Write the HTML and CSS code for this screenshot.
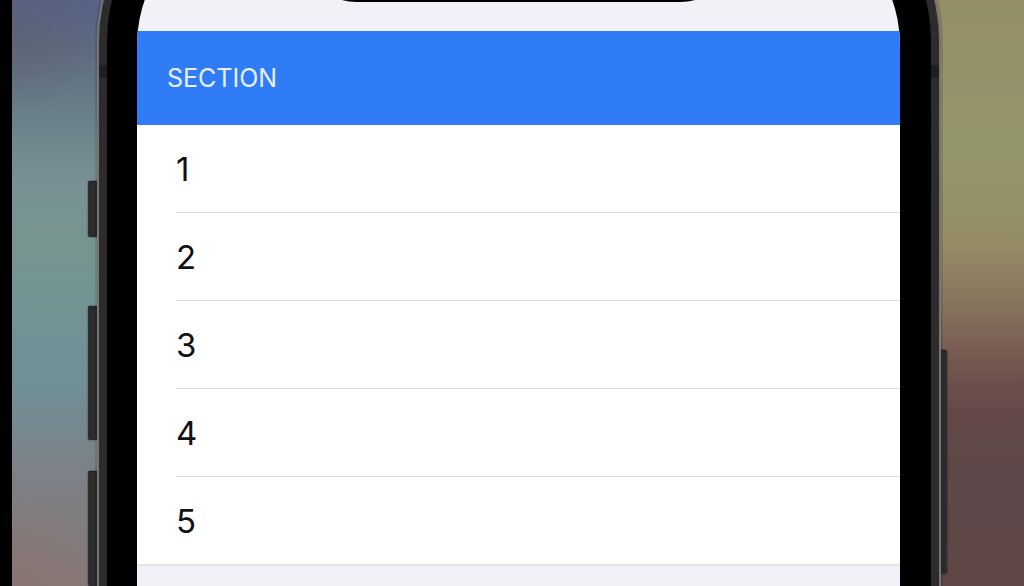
FILE: index.html
```html
<!DOCTYPE html>
<html lang="en">
<head>
    <meta charset="UTF-8">
    <meta name="viewport" content="width=device-width, initial-scale=1.0">
    <title>Section List</title>
    <link rel="stylesheet" href="styles.css">
</head>
<body>

    <div class="wallpaper">
        <!-- Volume side -->
        <div class="side side-left">
            <div class="key key-mute"></div>
            <div class="key key-volume"></div>
            <div class="key key-fill"></div>
        </div>

        <div class="phone">
            <div class="antenna"></div>
            <div class="bezel">
                <main class="screen">
                    <div class="status-bar">
                        <div class="notch"></div>
                    </div>
                    <h2 class="section-header">SECTION</h2>
                    <ul class="list">
                        <li class="row">1</li>
                        <li class="row">2</li>
                        <li class="row">3</li>
                        <li class="row">4</li>
                        <li class="row">5</li>
                    </ul>
                </main>
            </div>
        </div>

        <!-- Power side -->
        <div class="side side-right">
            <div class="key key-power"></div>
        </div>
    </div>

</body>
</html>
```
FILE: styles.css
```css
* {
    margin: 0;
    padding: 0;
    box-sizing: border-box;
}

body {
    font-family: Inter, "Liberation Sans", sans-serif;
    background-color: #000;
    padding-left: 12px;
}

.wallpaper {
    display: flex;
    height: 100vh;
    min-height: 586px;
    overflow: hidden;
    background-image:
        radial-gradient(circle at 0 100%, rgba(139, 114, 112, 0.7), rgba(139, 114, 112, 0) 100px),
        radial-gradient(circle at 0 30px, rgba(94, 94, 108, 0.5), rgba(94, 94, 108, 0) 90px),
        linear-gradient(#566289 0, #5e6b80 50px, #6a8089 115px, #789195 185px, #76958f 245px, #729296 325px, #718f96 385px, #77868d 435px, #7e8084 490px, #857a78 586px),
        linear-gradient(#958e67 0, #94926a 80px, #95956b 140px, #949268 200px, #948b65 245px, #89765e 300px, #7a5f52 345px, #6c4f4c 385px, #644849 415px, #5f4849 470px, #5f4748 586px);
    background-repeat: no-repeat;
    background-position: left, left, left, right;
    background-size: 50% 100%;
}

.side {
    display: flex;
    flex-direction: column;
}

.side-left {
    width: 85px;
    padding-top: 181px;
    align-items: flex-end;
}

.side-right {
    width: 83px;
    padding-top: 350px;
}

.key {
    width: 9px;
    background-color: #2c2c2c;
    border-top: 1px solid #1c1e1e;
    border-radius: 2px 0 0 2px;
    box-shadow: 0 0 2px rgba(0, 0, 0, 0.6);
}

.key-mute {
    height: 56px;
    margin-bottom: 69px;
}

.key-volume {
    height: 134px;
    margin-bottom: 31px;
}

.key-fill {
    flex: 1;
}

.key-power {
    width: 6px;
    height: 224px;
    border-radius: 0 2px 2px 0;
}

/* the top of the phone runs past the top of the page */
.phone {
    position: relative;
    flex: 1;
    display: flex;
    margin-top: -130px;
    padding: 8px 8px 0;
    background-color: #2c2c2c;
    border: 2px solid #777674;
    border-bottom: none;
    border-radius: 170px 170px 0 0;
    box-shadow: 0 0 0 2px rgba(0, 0, 0, 0.12);
}

.antenna {
    position: absolute;
    top: 193px;
    left: 0;
    right: 0;
    height: 13px;
    background-color: #1f1f1f;
}

.bezel {
    position: relative;
    flex: 1;
    display: flex;
    padding: 30px 31px 0 30px;
    background-color: #000;
    border-radius: 160px 160px 0 0;
}

.screen {
    flex: 1;
    overflow: hidden;
    background-color: #f2f1f7;
    border-radius: 135px 135px 0 0;
}

.status-bar {
    display: flex;
    justify-content: center;
    height: 121px;
}

.notch {
    width: 58%;
    height: 92px;
    background-color: #000;
    border-radius: 0 0 60px 60px;
}

.section-header {
    padding: 1px 30px 0;
    background-color: #307cf6;
    color: #e6f0ff;
    font-size: 25px;
    font-weight: 400;
    line-height: 93px;
}

.list {
    list-style: none;
    padding-left: 39px;
    background-color: #fff;
    border-bottom: 2px solid #e5e5e7;
}

.row {
    height: 88px;
    border-bottom: 1px solid #dededf;
    color: #111;
    font-size: 33px;
    line-height: 89px;
}

.row:last-child {
    height: 87px;
    border-bottom: none;
}
```
